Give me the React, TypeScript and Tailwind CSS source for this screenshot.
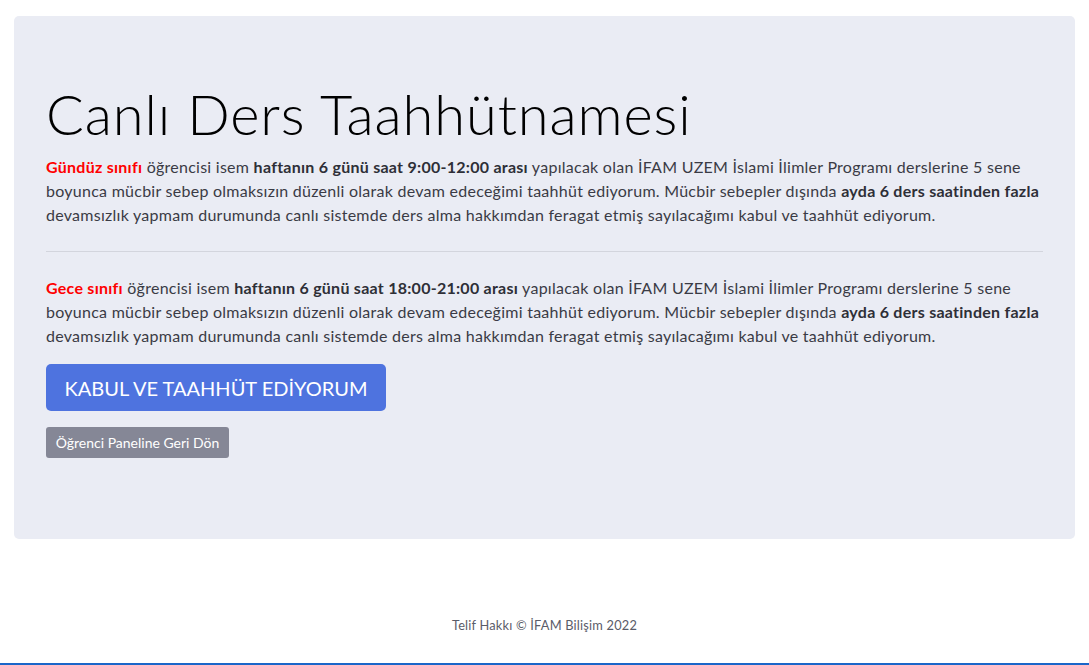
export default function App() {
  return (
    <div
      className="min-h-[665px] bg-white flex flex-col border-b-2 border-[#1a66c9]"
      style={{ fontFamily: "Lato, 'Noto Sans', sans-serif" }}
    >
      <div className="mx-[14px] mt-[16px] rounded-[5px] bg-[#eaecf4] px-[32px] pt-[64px] pb-[81px] text-[#3a3b45]">
        <h1 className="text-[56px] leading-[1.2] font-light tracking-[0.9px] text-black mb-2">
          Canlı Ders Taahhütnamesi
        </h1>
        <p className="text-[16px] leading-[24px] tracking-[0.26px]">
          <b className="text-[#ff0000] font-bold">Gündüz sınıfı</b> öğrencisi isem{" "}
          <b className="font-bold text-[#2e2f37]">haftanın 6 günü saat 9:00-12:00 arası</b> yapılacak olan İFAM UZEM
          İslami İlimler Programı derslerine 5 sene boyunca mücbir sebep olmaksızın düzenli olarak devam edeceğimi
          taahhüt ediyorum. Mücbir sebepler dışında{" "}
          <b className="font-bold text-[#2e2f37]">ayda 6 ders saatinden fazla</b> devamsızlık yapmam durumunda canlı
          sistemde ders alma hakkımdan feragat etmiş sayılacağımı kabul ve taahhüt ediyorum.
        </p>
        <hr className="my-6 border-0 border-t border-[#d3d5dd]" />
        <p className="text-[16px] leading-[24px] tracking-[0.26px]">
          <b className="text-[#ff0000] font-bold">Gece sınıfı</b> öğrencisi isem{" "}
          <b className="font-bold text-[#2e2f37]">haftanın 6 günü saat 18:00-21:00 arası</b> yapılacak olan İFAM UZEM
          İslami İlimler Programı derslerine 5 sene boyunca mücbir sebep olmaksızın düzenli olarak devam edeceğimi
          taahhüt ediyorum. Mücbir sebepler dışında{" "}
          <b className="font-bold text-[#2e2f37]">ayda 6 ders saatinden fazla</b> devamsızlık yapmam durumunda canlı
          sistemde ders alma hakkımdan feragat etmiş sayılacağımı kabul ve taahhüt ediyorum.
        </p>
        <div className="mt-4 flex flex-col items-start gap-4">
          <button className="h-[47px] w-[340px] rounded-[5px] bg-[#4e73df] text-[20px] text-white">
            KABUL VE TAAHHÜT EDİYORUM
          </button>
          <button className="h-[31px] w-[183px] rounded-[3px] bg-[#858796] text-[14px] text-white">
            Öğrenci Paneline Geri Dön
          </button>
        </div>
      </div>
      <footer className="flex-1 flex items-end justify-center pb-[28px]">
        <span className="text-[12.8px] tracking-[0.2px] text-[#5a5c69]">Telif Hakkı © İFAM Bilişim 2022</span>
      </footer>
    </div>
  );
}
